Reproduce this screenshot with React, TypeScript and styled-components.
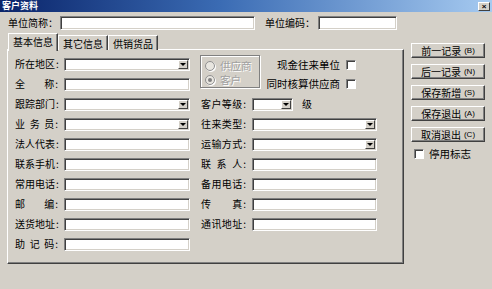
import React from 'react';
import styled, { createGlobalStyle } from 'styled-components';

const GlobalStyle = createGlobalStyle`
    html, body {
        margin: 0;
        padding: 0;
        background: #d4d0c8;
    }
    body {
        font-family: "Noto Sans CJK SC", "Liberation Sans", sans-serif;
        font-size: 10px;
        color: #000;
    }
`;

const Window = styled.div`
    width: 492px;
    height: 289px;
    overflow: hidden;
    background: #d4d0c8;
    display: flex;
    flex-direction: column;
`;

const TitleBar = styled.div`
    flex: none;
    height: 12px;
    display: flex;
    align-items: center;
    justify-content: space-between;
    padding: 0 2px;
    background: linear-gradient(to right, #0a246a 0%, #3b6cb4 45%, #a6caf0 100%);
`;

const TitleText = styled.span`
    color: #fff;
    font-weight: bold;
    font-size: 9px;
    line-height: 12px;
    white-space: nowrap;
`;

const CloseBox = styled.div`
    width: 12px;
    height: 9px;
    box-sizing: border-box;
    background: #d4d0c8;
    border-top: 1px solid #fff;
    border-left: 1px solid #fff;
    border-right: 1px solid #404040;
    border-bottom: 1px solid #404040;
    display: flex;
    align-items: center;
    justify-content: center;
    font: bold 8px "Liberation Sans", sans-serif;
    line-height: 7px;
`;

const Body = styled.div`
    flex: 1;
    display: flex;
    padding-top: 4px;
`;

const Main = styled.div`
    width: 397px;
    margin-left: 7px;
    display: flex;
    flex-direction: column;
`;

const TopRow = styled.div`
    height: 14px;
    display: flex;
    align-items: center;
    padding-left: 1px;
`;

const Plain = styled.span<{ $w?: number; $ml?: number }>`
    display: inline-block;
    width: ${(p) => (p.$w ? `${p.$w}px` : 'auto')};
    margin-left: ${(p) => p.$ml || 0}px;
    white-space: nowrap;
    line-height: 14px;
`;

const Field = styled.div<{ $w: number; $h?: number }>`
    position: relative;
    box-sizing: border-box;
    width: ${(p) => p.$w}px;
    height: ${(p) => p.$h || 13}px;
    background: #fff;
    border-top: 1px solid #808080;
    border-left: 1px solid #808080;
    border-right: 1px solid #fff;
    border-bottom: 1px solid #fff;
    box-shadow: inset 1px 1px 0 #404040, inset -1px -1px 0 #d4d0c8;
`;

const DropButton = styled.div`
    position: absolute;
    top: 1px;
    right: 1px;
    bottom: 1px;
    width: 10px;
    box-sizing: border-box;
    background: #d4d0c8;
    border-top: 1px solid #fff;
    border-left: 1px solid #fff;
    border-right: 1px solid #404040;
    border-bottom: 1px solid #404040;
    display: flex;
    align-items: center;
    justify-content: center;

    &::after {
        content: '';
        border-left: 3px solid transparent;
        border-right: 3px solid transparent;
        border-top: 3px solid #000;
    }
`;

const Tabs = styled.div`
    margin-top: 3px;
    height: 17px;
    display: flex;
    align-items: flex-end;
    padding-left: 1px;
    position: relative;
    z-index: 1;
`;

const Tab = styled.div<{ $active?: boolean }>`
    box-sizing: border-box;
    width: 50px;
    height: ${(p) => (p.$active ? 18 : 15)}px;
    margin-bottom: ${(p) => (p.$active ? -1 : 0)}px;
    background: #d4d0c8;
    border-top: 1px solid #fff;
    border-left: 1px solid #fff;
    border-right: 1px solid #404040;
    box-shadow: inset -1px 0 0 #808080;
    display: flex;
    align-items: center;
    justify-content: center;
    white-space: nowrap;
    line-height: 13px;
    padding-bottom: ${(p) => (p.$active ? 2 : 0)}px;
`;

const Panel = styled.div`
    box-sizing: border-box;
    height: 215px;
    margin-top: -1px;
    border-top: 1px solid #fff;
    border-left: 1px solid #fff;
    border-right: 1px solid #404040;
    border-bottom: 1px solid #404040;
    box-shadow: inset -1px -1px 0 #808080;
    padding: 4px 0 0 6px;
    display: grid;
    grid-template-columns: 50px 126px 10px 52px 125px;
    grid-auto-rows: 20px;
    align-items: center;
`;

const LabelBox = styled.div<{ $col: number; $row: number }>`
    grid-column: ${(p) => p.$col};
    grid-row: ${(p) => p.$row};
    display: flex;
    align-items: center;
    line-height: 14px;
    white-space: nowrap;
`;

const Spread = styled.span<{ $w: number }>`
    display: inline-flex;
    justify-content: space-between;
    width: ${(p) => p.$w}px;
    padding-left: 1px;
`;

const Colon = styled.span`
    display: inline-block;
    width: 9px;
    padding-left: 1px;
`;

const Cell = styled.div<{ $col: number; $row: number }>`
    grid-column: ${(p) => p.$col};
    grid-row: ${(p) => p.$row};
    display: flex;
    align-items: center;
`;

const TopRight = styled.div`
    grid-column: 4 / 6;
    grid-row: 1 / 3;
    align-self: stretch;
    display: flex;
`;

const RadioBox = styled.div`
    box-sizing: border-box;
    width: 60px;
    height: 33px;
    margin-top: 1px;
    border: 1px solid #808080;
    box-shadow: inset 1px 1px 0 #fff, 1px 1px 0 #fff;
    padding: 3px 0 0 4px;
    display: flex;
    flex-direction: column;
    gap: 1px;
`;

const RadioItem = styled.div`
    display: flex;
    align-items: center;
    height: 13px;
    color: #a0a0a0;
    text-shadow: 1px 1px 0 #fff;
    line-height: 13px;
    font-size: 10.5px;
`;

const RadioDot = styled.span<{ $on?: boolean }>`
    box-sizing: border-box;
    width: 10px;
    height: 10px;
    margin-right: 5px;
    border-radius: 50%;
    background: #e8e6e0;
    border: 1px solid #909090;
    box-shadow: 1px 1px 0 #fff;
    display: flex;
    align-items: center;
    justify-content: center;

    &::after {
        content: '';
        width: 4px;
        height: 4px;
        border-radius: 50%;
        background: ${(p) => (p.$on ? '#808080' : 'transparent')};
    }
`;

const Checks = styled.div`
    flex: 1;
    display: flex;
    flex-direction: column;
    align-items: flex-end;
    padding: 1px 21px 0 0;
`;

const CheckRow = styled.div`
    height: 20px;
    display: flex;
    align-items: center;
    gap: 6px;
    line-height: 14px;
    white-space: nowrap;
    font-size: 10.5px;
`;

const Box = styled.span`
    box-sizing: border-box;
    width: 10px;
    height: 10px;
    background: #fff;
    border-top: 1px solid #808080;
    border-left: 1px solid #808080;
    border-right: 1px solid #fff;
    border-bottom: 1px solid #fff;
    box-shadow: inset 1px 1px 0 #404040;
`;

const Side = styled.div`
    width: 74px;
    margin: 27px 0 0 7px;
    display: flex;
    flex-direction: column;
    gap: 6px;
`;

const Button = styled.div`
    box-sizing: border-box;
    height: 15px;
    background: #d4d0c8;
    border-top: 1px solid #fff;
    border-left: 1px solid #fff;
    border-right: 1px solid #404040;
    border-bottom: 1px solid #404040;
    box-shadow: inset -1px -1px 0 #808080;
    display: flex;
    align-items: center;
    justify-content: center;
    font-size: 10px;
    line-height: 12px;
    white-space: nowrap;
`;

const Key = styled.span`
    font-family: "Liberation Sans", sans-serif;
    font-size: 8px;
    margin-left: 3px;
`;

const SideCheck = styled.div`
    display: flex;
    align-items: center;
    gap: 5px;
    padding-left: 3px;
    margin-top: -1px;
    line-height: 14px;
    font-size: 10.5px;
`;

const Label = ({ text, col, row, w }: { text: string; col: number; row: number; w: number }) => (
    <LabelBox $col={col} $row={row}>
        <Spread $w={w}>
            {[...text].map((c, i) => (
                <span key={i}>{c}</span>
            ))}
        </Spread>
        <Colon>:</Colon>
    </LabelBox>
);

const Combo = ({ w }: { w: number }) => (
    <Field $w={w}>
        <DropButton />
    </Field>
);

type Row = { label: string; combo?: boolean };

const leftRows: Row[] = [
    { label: '所在地区', combo: true },
    { label: '全称' },
    { label: '跟踪部门', combo: true },
    { label: '业务员', combo: true },
    { label: '法人代表' },
    { label: '联系手机' },
    { label: '常用电话' },
    { label: '邮编' },
    { label: '送货地址' },
    { label: '助记码' },
];

const rightRows: Row[] = [
    { label: '往来类型', combo: true },
    { label: '运输方式', combo: true },
    { label: '联系人' },
    { label: '备用电话' },
    { label: '传真' },
    { label: '通讯地址' },
];

const buttons = [
    ['前一记录', '(B)'],
    ['后一记录', '(N)'],
    ['保存新增', '(S)'],
    ['保存退出', '(A)'],
    ['取消退出', '(C)'],
];

export default function App() {
    return (
        <Window>
            <GlobalStyle />
            <TitleBar>
                <TitleText>客户资料</TitleText>
                <CloseBox>×</CloseBox>
            </TitleBar>
            <Body>
                <Main>
                    <TopRow>
                        <Plain $w={52}>单位简称：</Plain>
                        <Field $w={195} $h={14} />
                        <Plain $w={53} $ml={10}>单位编码：</Plain>
                        <Field $w={79} $h={14} />
                    </TopRow>
                    <Tabs>
                        <Tab $active>基本信息</Tab>
                        <Tab>其它信息</Tab>
                        <Tab>供销货品</Tab>
                    </Tabs>
                    <Panel>
                        {leftRows.map((r, i) => (
                            <React.Fragment key={r.label}>
                                <Label text={r.label} col={1} row={i + 1} w={41} />
                                <Cell $col={2} $row={i + 1}>
                                    {r.combo ? <Combo w={126} /> : <Field $w={126} />}
                                </Cell>
                            </React.Fragment>
                        ))}

                        <TopRight>
                            <RadioBox>
                                <RadioItem>
                                    <RadioDot />
                                    供应商
                                </RadioItem>
                                <RadioItem>
                                    <RadioDot $on />
                                    客户
                                </RadioItem>
                            </RadioBox>
                            <Checks>
                                <CheckRow>
                                    现金往来单位
                                    <Box />
                                </CheckRow>
                                <CheckRow>
                                    同时核算供应商
                                    <Box />
                                </CheckRow>
                            </Checks>
                        </TopRight>

                        <Label text="客户等级" col={4} row={3} w={42} />
                        <Cell $col={5} $row={3}>
                            <Combo w={41} />
                            <Plain $ml={9}>级</Plain>
                        </Cell>

                        {rightRows.map((r, i) => (
                            <React.Fragment key={r.label}>
                                <Label text={r.label} col={4} row={i + 4} w={42} />
                                <Cell $col={5} $row={i + 4}>
                                    {r.combo ? <Combo w={125} /> : <Field $w={125} />}
                                </Cell>
                            </React.Fragment>
                        ))}
                    </Panel>
                </Main>
                <Side>
                    {buttons.map(([t, k]) => (
                        <Button key={t}>
                            {t}
                            <Key>{k}</Key>
                        </Button>
                    ))}
                    <SideCheck>
                        <Box />
                        停用标志
                    </SideCheck>
                </Side>
            </Body>
        </Window>
    );
}
